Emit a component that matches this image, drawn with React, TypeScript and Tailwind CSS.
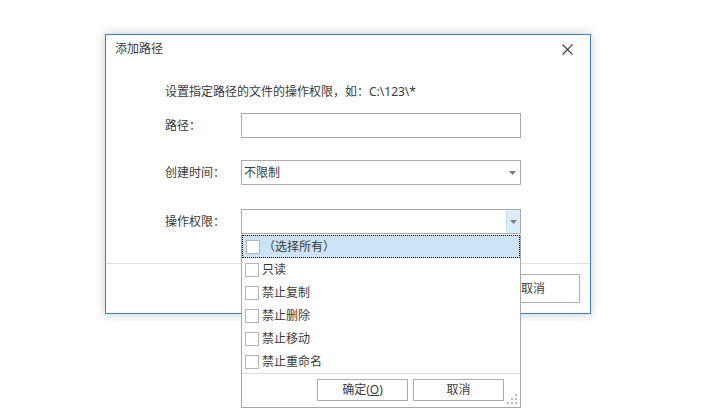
import React from "react";

const font = { fontFamily: "'Noto Sans', 'Noto Sans CJK SC', sans-serif" };

function Arrow() {
  return (
    <svg width="7" height="4" viewBox="0 0 7 4">
      <path d="M0 0 H7 L3.5 4 Z" fill="#7a7a7a" />
    </svg>
  );
}

function CheckRow({ label, active }: { label: string; active?: boolean }) {
  return (
    <div
      className={`flex h-[23px] items-center pl-[3px] ${
        active ? "bg-[#cce4f7] border border-dotted border-black pl-[2px]" : ""
      }`}
    >
      <span className="h-[14px] w-[14px] shrink-0 border border-[#b4b4b4] bg-white"></span>
      <span className="ml-[3px] text-[12px] leading-none text-[#3a3a3a]">{label}</span>
    </div>
  );
}

function Grip() {
  return (
    <svg width="12" height="12" viewBox="0 0 12 12" className="absolute bottom-[2px] right-[2px]">
      {[
        [9, 1],
        [5, 5],
        [9, 5],
        [1, 9],
        [5, 9],
        [9, 9],
      ].map(([x, y], i) => (
        <rect key={i} x={x} y={y} width="2" height="2" fill="#b8b8b8" />
      ))}
    </svg>
  );
}

export default function App() {
  const options = ["只读", "禁止复制", "禁止删除", "禁止移动", "禁止重命名"];

  return (
    <div className="h-[414px] w-[716px] overflow-hidden bg-white pl-[105px] pt-[34px]" style={font}>
      {/* Dialog */}
      <div className="flex h-[280px] w-[486px] flex-col border border-[#3d80c9] bg-white shadow-[0_0_10px_rgba(0,0,0,0.22)]">
        {/* Title bar */}
        <div className="flex h-[28px] items-center justify-between pl-[9px] pr-[17px]">
          <span className="text-[12px] leading-none text-[#3a3a3a]">添加路径</span>
          <svg width="11" height="11" viewBox="0 0 11 11">
            <path d="M0.5 0.5 L10.5 10.5 M10.5 0.5 L0.5 10.5" stroke="#444" strokeWidth="1.2" />
          </svg>
        </div>

        {/* Body */}
        <div className="flex-1 pl-[59px]">
          <div className="mt-[23px] text-[12px] leading-none text-[#3a3a3a]">
            设置指定路径的文件的操作权限，如：C:\123\*
          </div>

          <div className="mt-[15px] flex items-center">
            <span className="w-[76px] text-[12px] leading-none text-[#3a3a3a]">路径：</span>
            <div className="h-[25px] w-[280px] border border-[#ababab] bg-white"></div>
          </div>

          <div className="mt-[22px] flex items-center">
            <span className="w-[76px] text-[12px] leading-none text-[#3a3a3a]">创建时间：</span>
            <div className="flex h-[25px] w-[280px] items-center justify-between border border-[#ababab] bg-white pl-[2px] pr-[4px]">
              <span className="text-[12px] leading-none text-[#3a3a3a]">不限制</span>
              <Arrow />
            </div>
          </div>

          <div className="mt-[24px] flex items-center">
            <span className="w-[76px] text-[12px] leading-none text-[#3a3a3a]">操作权限：</span>
            <div className="relative">
              <div className="flex h-[25px] w-[280px] justify-end border border-[#ababab] bg-white">
                <div className="flex w-[14px] items-center justify-center border-l border-[#c5dcf2] bg-[#dcecfc]">
                  <Arrow />
                </div>
              </div>

              {/* Dropdown popup */}
              <div className="absolute left-0 top-[26px] z-10 h-[173px] w-[280px] border-x border-b border-[#a8a8a8] bg-white">
                <CheckRow label="（选择所有）" active />
                {options.map((o) => (
                  <CheckRow key={o} label={o} />
                ))}
                <div className="flex h-[34px] justify-end gap-[5px] border-t border-[#d9d9d9] pr-[16px] pt-[5px]">
                  <button className="h-[22px] w-[91px] border border-[#adadad] bg-white text-[12px] leading-none text-[#3a3a3a]">
                    确定(<span className="underline">O</span>)
                  </button>
                  <button className="h-[22px] w-[91px] border border-[#adadad] bg-white text-[12px] leading-none text-[#3a3a3a]">
                    取消
                  </button>
                </div>
                <Grip />
              </div>
            </div>
          </div>
        </div>

        {/* Footer */}
        <div className="flex h-[50px] items-center justify-end gap-[8px] border-t border-[#dfdfdf] pr-[10px]">
          <button className="h-[29px] w-[94px] border border-[#adadad] bg-white text-[12px] leading-none text-[#3a3a3a]">
            确定
          </button>
          <button className="h-[29px] w-[94px] border border-[#adadad] bg-white text-[12px] leading-none text-[#3a3a3a]">
            取消
          </button>
        </div>
      </div>
    </div>
  );
}
